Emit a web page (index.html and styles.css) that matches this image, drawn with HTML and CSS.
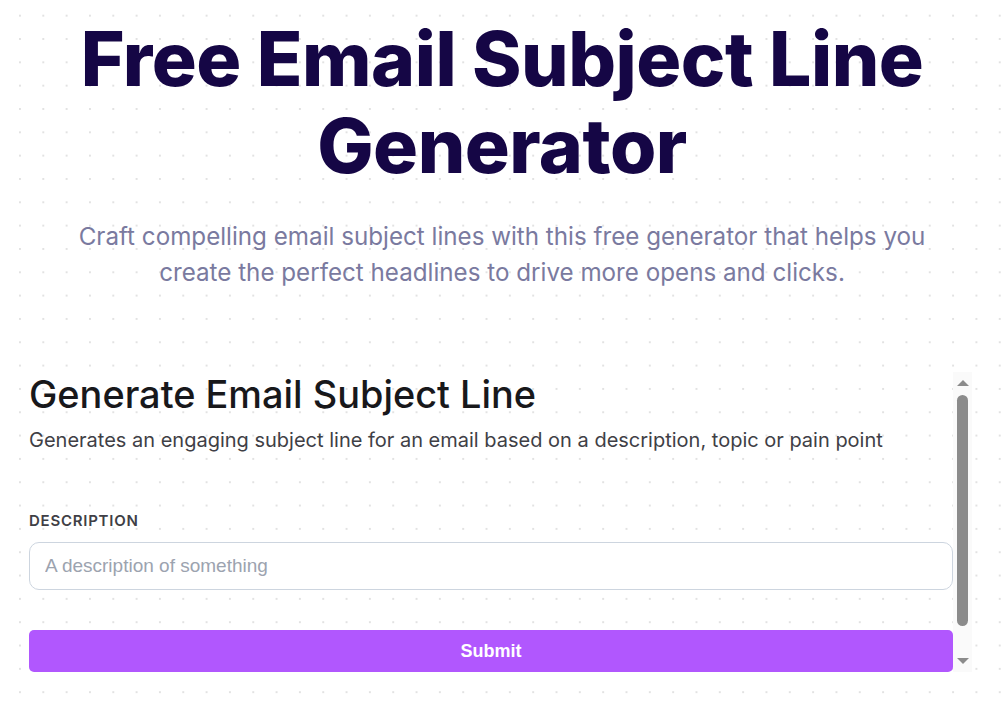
FILE: index.html
```html
<!DOCTYPE html>
<html lang="en">
<head>
    <meta charset="UTF-8">
    <meta name="viewport" content="width=device-width, initial-scale=1.0">
    <title>Free Email Subject Line Generator</title>
    <link rel="stylesheet" href="styles.css">
</head>
<body>
    <header class="hero">
        <h1>Free Email Subject Line Generator</h1>
        <p class="lead">Craft compelling email subject lines with this free generator that helps you create the perfect headlines to drive more opens and clicks.</p>
    </header>

    <div class="tool-wrap">
        <section class="tool">
            <h2>Generate Email Subject Line</h2>
            <p class="tool-desc">Generates an engaging subject line for an email based on a description, topic or pain point</p>

            <form class="tool-form" onsubmit="return false;">
                <label for="description">Description</label>
                <input type="text" id="description" placeholder="A description of something">
                <button type="submit">Submit</button>
            </form>
            <div id="result" class="result"></div>
        </section>
        <div class="scrollbar">
            <span class="arrow up"></span>
            <span class="thumb"></span>
            <span class="arrow down"></span>
        </div>
    </div>
</body>
</html>
```

FILE: styles.css
```css
body {
    margin: 0;
    font-family: Inter, "Noto Sans", sans-serif;
    background-color: #fff;
    background-image: radial-gradient(circle, #e2e2e2 1px, transparent 1.3px);
    background-size: 23.33px 23.33px;
    background-position: 8.3px 4px;
}
.hero {
    text-align: center;
    padding: 15px 30px 0;
}
.hero h1 {
    margin: 0 auto;
    max-width: 900px;
    font-size: 75px;
    line-height: 87px;
    font-weight: 800;
    letter-spacing: -0.5px;
    color: #150645;
}
.lead {
    margin: 30px auto 0;
    max-width: 900px;
    font-size: 24.2px;
    line-height: 35.6px;
    color: #7a7a9f;
}
.tool-wrap {
    display: flex;
    margin: 82px 32px 0 29px;
    height: 300px;
}
.tool {
    flex: 1;
    overflow: hidden;
}
.tool h2 {
    margin: 0;
    font-size: 37.9px;
    line-height: 45px;
    font-weight: 500;
    color: #18181b;
}
.tool-desc {
    margin: 9px 0 0;
    font-size: 20px;
    line-height: 28px;
    color: #3f3f46;
}
.tool-form {
    display: flex;
    flex-direction: column;
    margin-top: 57px;
}
.tool-form label {
    font-size: 15px;
    line-height: 20px;
    font-weight: 600;
    letter-spacing: 0.05em;
    text-transform: uppercase;
    color: #3f3f46;
}
.tool-form input {
    margin-top: 11px;
    height: 48px;
    box-sizing: border-box;
    padding: 0 15px;
    border: 1px solid #cdd5df;
    border-radius: 10px;
    background: #fff;
    font-family: "Liberation Sans", Arial, sans-serif;
    font-size: 19px;
    color: #111;
}
.tool-form input::placeholder {
    color: #9ca3af;
}
.tool-form button {
    margin-top: 40px;
    height: 42px;
    border: 0;
    border-radius: 5px;
    background: #b157fe;
    color: #fff;
    font-family: "Liberation Sans", Arial, sans-serif;
    font-size: 18px;
    font-weight: 700;
    cursor: pointer;
}
.result {
    height: 40px;
}

/* scrollbar beside the tool panel */
.scrollbar {
    width: 19px;
    display: flex;
    flex-direction: column;
    align-items: center;
    background: #fafafa;
}
.arrow {
    width: 0;
    height: 0;
    border-left: 6.5px solid transparent;
    border-right: 6.5px solid transparent;
}
.arrow.up {
    margin-top: 8px;
    border-bottom: 6px solid #8b8b8b;
}
.arrow.down {
    margin-top: auto;
    margin-bottom: 8px;
    border-top: 6px solid #8b8b8b;
}
.thumb {
    margin-top: 9px;
    width: 11px;
    height: 231px;
    border-radius: 6px;
    background: #8b8b8b;
}
```
